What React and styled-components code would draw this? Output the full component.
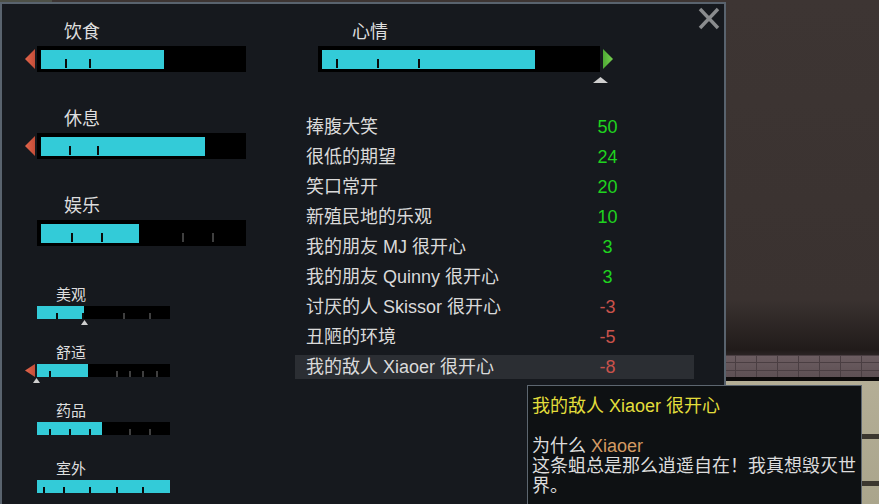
import React from 'react';
import styled, { createGlobalStyle } from 'styled-components';

const GlobalStyle = createGlobalStyle`
  html, body { margin: 0; padding: 0; background: #3b3432; }
  body { font-family: "Liberation Sans", "Noto Sans CJK SC", sans-serif; }
`;

const CYAN = '#33cbd8';

const Scene = styled.div`
  position: relative;
  width: 879px;
  height: 504px;
  overflow: hidden;
  display: flex;
  align-items: flex-start;
  background:
    linear-gradient(#4d5047, #4d5047) 0 0 / 52px 2px no-repeat,
    linear-gradient(#0d0b0b, #0d0b0b) 0 377px / 100% 4px no-repeat,
    linear-gradient(to bottom, transparent 0 434px, #3b372f 434px 439px, transparent 439px 481px, #3b372f 481px 486px, transparent 486px),
    repeating-linear-gradient(to bottom, #4a3e42 0 1px, transparent 1px 7.4px) 0 355px / 100% 22px no-repeat,
    repeating-linear-gradient(to right, #4a3e42 0 1px, transparent 1px 21px) 0 355px / 100% 22px no-repeat,
    linear-gradient(#6c5d61, #5e5054) 0 355px / 100% 22px no-repeat,
    linear-gradient(#b4ae96, #aaa58c) 0 381px / 100% 123px no-repeat,
    linear-gradient(to bottom, #3d3533 0, #3a3230 300px, #211b1a 350px, #2b2424 355px, #2b2424 100%);
`;

const Panel = styled.div`
  position: relative;
  box-sizing: border-box;
  width: 726px;
  height: 520px;
  margin-top: 2px;
  border: 2px solid #59636e;
  border-bottom: none;
  background: #16191e;
  display: flex;
  padding: 17px 0 0 23px;
`;

const CloseButton = styled.button`
  position: absolute;
  top: 3px;
  right: 4px;
  width: 22px;
  height: 23px;
  padding: 0;
  border: none;
  background: transparent;
  cursor: pointer;
  display: block;
`;

const LeftColumn = styled.div`
  width: 270px;
  display: flex;
  flex-direction: column;
`;

const BigGroup = styled.div`
  display: flex;
  flex-direction: column;
  gap: 36px;
`;

const SmallGroup = styled.div`
  margin-top: 40px;
  display: flex;
  flex-direction: column;
  gap: 25px;
`;

const NeedBlock = styled.div`
  display: flex;
  flex-direction: column;
`;

const NeedLabel = styled.div`
  color: #dedede;
  font-size: ${p => (p.$small ? '15px' : '18px')};
  line-height: ${p => (p.$small ? '18px' : '22px')};
  margin: 0 0 ${p => (p.$small ? '2px' : '3px')} ${p => p.$indent}px;
  white-space: nowrap;
`;

const BarRow = styled.div`
  display: flex;
  align-items: center;
`;

const ArrowSlot = styled.div`
  width: 10px;
  margin-right: 2px;
  display: flex;
  align-items: center;
`;

const Track = styled.div`
  position: relative;
  box-sizing: border-box;
  width: ${p => p.$w}px;
  height: ${p => (p.$small ? 13 : 26)}px;
  padding: ${p => (p.$small ? '0' : '4px 4px 3px 4px')};
  background: #000;
  flex: none;
`;

const TrackInner = styled.div`
  position: relative;
  width: 100%;
  height: 100%;
`;

const Fill = styled.div`
  height: 100%;
  background: ${CYAN};
`;

const Tick = styled.div`
  position: absolute;
  bottom: ${p => (p.$small ? 0 : 1)}px;
  width: 2px;
  height: ${p => (p.$small ? 6 : 9)}px;
  background: ${p => (p.$gray ? '#3f3f3f' : '#0b0b0b')};
`;

const Marker = styled.svg`
  position: absolute;
  display: block;
`;

const RightColumn = styled.div`
  width: 399px;
  display: flex;
  flex-direction: column;
`;

const MoodSection = styled.div`
  padding-left: 23px;
  display: flex;
  flex-direction: column;
`;

const MoodArrowSlot = styled.div`
  margin-left: 3px;
  display: flex;
  align-items: center;
`;

const ThoughtList = styled.div`
  margin-top: 43px;
  display: flex;
  flex-direction: column;
  gap: 6px;
`;

const ThoughtRow = styled.div`
  height: 24px;
  display: flex;
  align-items: center;
  padding-left: 11px;
  background: ${p => (p.$active ? '#2b2e33' : 'transparent')};
  font-size: 18px;
  line-height: 24px;
  color: #dadada;
  white-space: nowrap;
`;

const ThoughtLabel = styled.div`
  width: 274px;
`;

const ThoughtValue = styled.div`
  width: 55px;
  text-align: center;
  color: ${p => (p.$neg ? '#c9524b' : '#1fd31f')};
`;

const Tooltip = styled.div`
  position: absolute;
  left: 527px;
  top: 385px;
  box-sizing: border-box;
  width: 335px;
  height: 140px;
  border: 1px solid #5d6670;
  background: #0e1113;
  padding: 10px 3px 0 4px;
  font-size: 18px;
  line-height: 20px;
  color: #dcdcdc;
`;

const TipTitle = styled.div`
  color: #e2de3b;
  margin-bottom: 20px;
`;

const TipName = styled.span`
  color: #d39a62;
`;

const RedArrow = ({ small }) => {
  const h = small ? 13 : 20;
  return (
    <svg width="10" height={h} viewBox={`0 0 10 ${h}`} style={{ display: 'block' }}>
      <defs>
        <linearGradient id={`ra${h}`} x1="0" x2="1" y1="0" y2="0">
          <stop offset="0" stopColor="#e2654b" />
          <stop offset="1" stopColor="#c44d38" />
        </linearGradient>
      </defs>
      <polygon points={`10,0 0,${h / 2} 10,${h}`} fill={`url(#ra${h})`} />
    </svg>
  );
};

const GreenArrow = () => (
  <svg width="10" height="20" viewBox="0 0 10 20" style={{ display: 'block' }}>
    <defs>
      <linearGradient id="ga" x1="0" x2="1" y1="0" y2="0">
        <stop offset="0" stopColor="#4ea934" />
        <stop offset="1" stopColor="#76cf50" />
      </linearGradient>
    </defs>
    <polygon points="0,0 10,10 0,20" fill="url(#ga)" />
  </svg>
);

const UpMarker = ({ left, top, w = 7, h = 5 }) => (
  <Marker width={w} height={h} viewBox={`0 0 ${w} ${h}`} style={{ left, top }}>
    <polygon points={`0,${h} ${w / 2},0 ${w},${h}`} fill="#cfcfcf" />
  </Marker>
);

const Bar = ({ width, small, fill, ticks = [], grayTicks = [], marker, children }) => (
  <Track $w={width} $small={small}>
    <TrackInner>
      <Fill style={{ width: fill }} />
      {ticks.map(t => <Tick key={'b' + t} $small={small} style={{ left: t }} />)}
      {grayTicks.map(t => <Tick key={'g' + t} $small={small} $gray style={{ left: t }} />)}
    </TrackInner>
    {marker}
    {children}
  </Track>
);

const bigNeeds = [
  { label: '饮食', fill: 123, ticks: [24, 48], gray: [], arrow: true },
  { label: '休息', fill: 164, ticks: [28, 56], gray: [], arrow: true },
  { label: '娱乐', fill: 98, ticks: [30, 60], gray: [141, 171], arrow: false },
];

const smallNeeds = [
  { label: '美观', fill: 47, ticks: [19, 45], gray: [86, 112], marker: 44 },
  { label: '舒适', fill: 51, ticks: [12], gray: [79, 92, 105, 119], arrow: true, marker: -4 },
  { label: '药品', fill: 65, ticks: [12, 32, 52], gray: [92, 112] },
  { label: '室外', fill: 133, ticks: [6, 26, 52, 79, 105], gray: [] },
];

const thoughts = [
  ['捧腹大笑', 50],
  ['很低的期望', 24],
  ['笑口常开', 20],
  ['新殖民地的乐观', 10],
  ['我的朋友 MJ 很开心', 3],
  ['我的朋友 Quinny 很开心', 3],
  ['讨厌的人 Skissor 很开心', -3],
  ['丑陋的环境', -5],
  ['我的敌人 Xiaoer 很开心', -8],
];

export default function App() {
  return (
    <>
      <GlobalStyle />
      <Scene>
        <Panel>
          <CloseButton aria-label="关闭">
            <svg width="22" height="23" viewBox="0 0 22 23" style={{ display: 'block' }}>
              <line x1="2" y1="2" x2="20" y2="21" stroke="#8a8c8e" strokeWidth="3.4" />
              <line x1="20" y1="2" x2="2" y2="21" stroke="#8a8c8e" strokeWidth="3.4" />
            </svg>
          </CloseButton>

          <LeftColumn>
            <BigGroup>
              {bigNeeds.map(n => (
                <NeedBlock key={n.label}>
                  <NeedLabel $indent={39}>{n.label}</NeedLabel>
                  <BarRow>
                    <ArrowSlot>{n.arrow && <RedArrow />}</ArrowSlot>
                    <Bar width={209} fill={n.fill} ticks={n.ticks} grayTicks={n.gray} />
                  </BarRow>
                </NeedBlock>
              ))}
            </BigGroup>
            <SmallGroup>
              {smallNeeds.map(n => (
                <NeedBlock key={n.label}>
                  <NeedLabel $small $indent={31}>{n.label}</NeedLabel>
                  <BarRow>
                    <ArrowSlot>{n.arrow && <RedArrow small />}</ArrowSlot>
                    <Bar
                      width={133}
                      small
                      fill={n.fill}
                      ticks={n.ticks}
                      grayTicks={n.gray}
                      marker={n.marker !== undefined ? <UpMarker left={n.marker} top={14} /> : null}
                    />
                  </BarRow>
                </NeedBlock>
              ))}
            </SmallGroup>
          </LeftColumn>

          <RightColumn>
            <MoodSection>
              <NeedLabel $indent={34}>心情</NeedLabel>
              <BarRow>
                <Bar
                  width={282}
                  fill={213}
                  ticks={[14, 55, 96]}
                  marker={<UpMarker left={275} top={31} w={15} h={6} />}
                />
                <MoodArrowSlot><GreenArrow /></MoodArrowSlot>
              </BarRow>
            </MoodSection>
            <ThoughtList>
              {thoughts.map(([label, v], i) => (
                <ThoughtRow key={label} $active={i === thoughts.length - 1}>
                  <ThoughtLabel>{label}</ThoughtLabel>
                  <ThoughtValue $neg={v < 0}>{v}</ThoughtValue>
                </ThoughtRow>
              ))}
            </ThoughtList>
          </RightColumn>
        </Panel>

        <Tooltip>
          <TipTitle>我的敌人 Xiaoer 很开心</TipTitle>
          <div>为什么 <TipName>Xiaoer</TipName></div>
          <div>这条蛆总是那么逍遥自在！我真想毁灭世界。</div>
        </Tooltip>
      </Scene>
    </>
  );
}
